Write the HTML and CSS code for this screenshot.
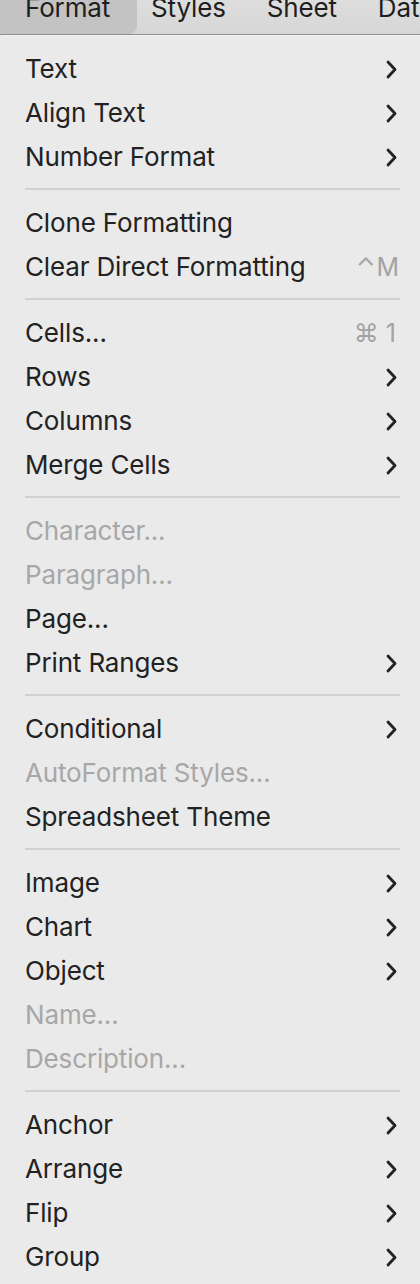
FILE: index.html
```html
<!DOCTYPE html>
<html>
<head>
<meta charset="utf-8">
<link rel="stylesheet" href="styles.css">
</head>
<body>
<div class="bar">
  <div class="bar-item active">Format</div>
  <div class="bar-item">Styles</div>
  <div class="bar-item">Sheet</div>
  <div class="bar-item">Dat</div>
</div>
<div class="menu">
  <div class="row"><span>Text</span><svg class="chev" viewBox="0 0 11 19"><polyline points="2,2 9,9.5 2,17"/></svg></div>
  <div class="row"><span>Align Text</span><svg class="chev" viewBox="0 0 11 19"><polyline points="2,2 9,9.5 2,17"/></svg></div>
  <div class="row"><span>Number Format</span><svg class="chev" viewBox="0 0 11 19"><polyline points="2,2 9,9.5 2,17"/></svg></div>
  <div class="sep"></div>
  <div class="row"><span>Clone Formatting</span></div>
  <div class="row"><span>Clear Direct Formatting</span><span class="key">⌃M</span></div>
  <div class="sep"></div>
  <div class="row"><span>Cells...</span><span class="key cmd">⌘ 1</span></div>
  <div class="row"><span>Rows</span><svg class="chev" viewBox="0 0 11 19"><polyline points="2,2 9,9.5 2,17"/></svg></div>
  <div class="row"><span>Columns</span><svg class="chev" viewBox="0 0 11 19"><polyline points="2,2 9,9.5 2,17"/></svg></div>
  <div class="row"><span>Merge Cells</span><svg class="chev" viewBox="0 0 11 19"><polyline points="2,2 9,9.5 2,17"/></svg></div>
  <div class="sep"></div>
  <div class="row disabled"><span>Character...</span></div>
  <div class="row disabled"><span>Paragraph...</span></div>
  <div class="row"><span>Page...</span></div>
  <div class="row"><span>Print Ranges</span><svg class="chev" viewBox="0 0 11 19"><polyline points="2,2 9,9.5 2,17"/></svg></div>
  <div class="sep"></div>
  <div class="row"><span>Conditional</span><svg class="chev" viewBox="0 0 11 19"><polyline points="2,2 9,9.5 2,17"/></svg></div>
  <div class="row disabled"><span>AutoFormat Styles...</span></div>
  <div class="row"><span>Spreadsheet Theme</span></div>
  <div class="sep"></div>
  <div class="row"><span>Image</span><svg class="chev" viewBox="0 0 11 19"><polyline points="2,2 9,9.5 2,17"/></svg></div>
  <div class="row"><span>Chart</span><svg class="chev" viewBox="0 0 11 19"><polyline points="2,2 9,9.5 2,17"/></svg></div>
  <div class="row"><span>Object</span><svg class="chev" viewBox="0 0 11 19"><polyline points="2,2 9,9.5 2,17"/></svg></div>
  <div class="row disabled"><span>Name...</span></div>
  <div class="row disabled"><span>Description...</span></div>
  <div class="sep"></div>
  <div class="row"><span>Anchor</span><svg class="chev" viewBox="0 0 11 19"><polyline points="2,2 9,9.5 2,17"/></svg></div>
  <div class="row"><span>Arrange</span><svg class="chev" viewBox="0 0 11 19"><polyline points="2,2 9,9.5 2,17"/></svg></div>
  <div class="row"><span>Flip</span><svg class="chev" viewBox="0 0 11 19"><polyline points="2,2 9,9.5 2,17"/></svg></div>
  <div class="row"><span>Group</span><svg class="chev" viewBox="0 0 11 19"><polyline points="2,2 9,9.5 2,17"/></svg></div>
</div>
</body>
</html>
```
FILE: styles.css
```css
html, body {
  margin: 0;
  padding: 0;
  background: #eaeaea;
  overflow: hidden;
}
body {
  font-family: Inter, "Liberation Sans", sans-serif;
  color: #222;
  width: 420px;
  height: 1284px;
}
.bar {
  height: 34px;
  display: flex;
  align-items: flex-start;
  background: linear-gradient(#dedede, #d6d6d6);
  border-bottom: 1px solid #8f8f8f;
  overflow: hidden;
}
.bar-item {
  font-size: 26px;
  line-height: 16px;
  padding: 0 0 18px 0;
  height: 16px;
  color: #1e1e1e;
  letter-spacing: -0.15px;
}
.bar-item.active {
  width: 112px;
  padding-left: 25px;
  background: #c3c3c3;
  border-bottom-right-radius: 8px;
}
.bar-item:nth-child(2) { margin-left: 14px; }
.bar-item:nth-child(3) { margin-left: 41px; }
.bar-item:nth-child(4) { margin-left: 41px; }
.menu {
  background: #eaeaea;
  border-top: 1px solid #f4f4f4;
  border-top-left-radius: 8px;
  padding: 11px 20px 0 25px;
}
.row {
  height: 44px;
  line-height: 44px;
  font-size: 26px;
  letter-spacing: -0.15px;
  display: flex;
  justify-content: space-between;
  align-items: center;
}
.row span { line-height: 44px; }
.row.disabled { color: #a7a7a7; }
.chev {
  width: 11px;
  height: 19px;
  margin-right: 3px;
  fill: none;
  stroke: #222;
  stroke-width: 2.8;
  stroke-linecap: round;
  stroke-linejoin: round;
}
.key {
  color: #a3a3a3;
  font-size: 25px;
  letter-spacing: 1px;
}
.key.cmd { margin-right: 4px; letter-spacing: 0; }
.sep {
  height: 2px;
  background: #d1d1d1;
  margin: 9px 0 11px 0;
}
```
